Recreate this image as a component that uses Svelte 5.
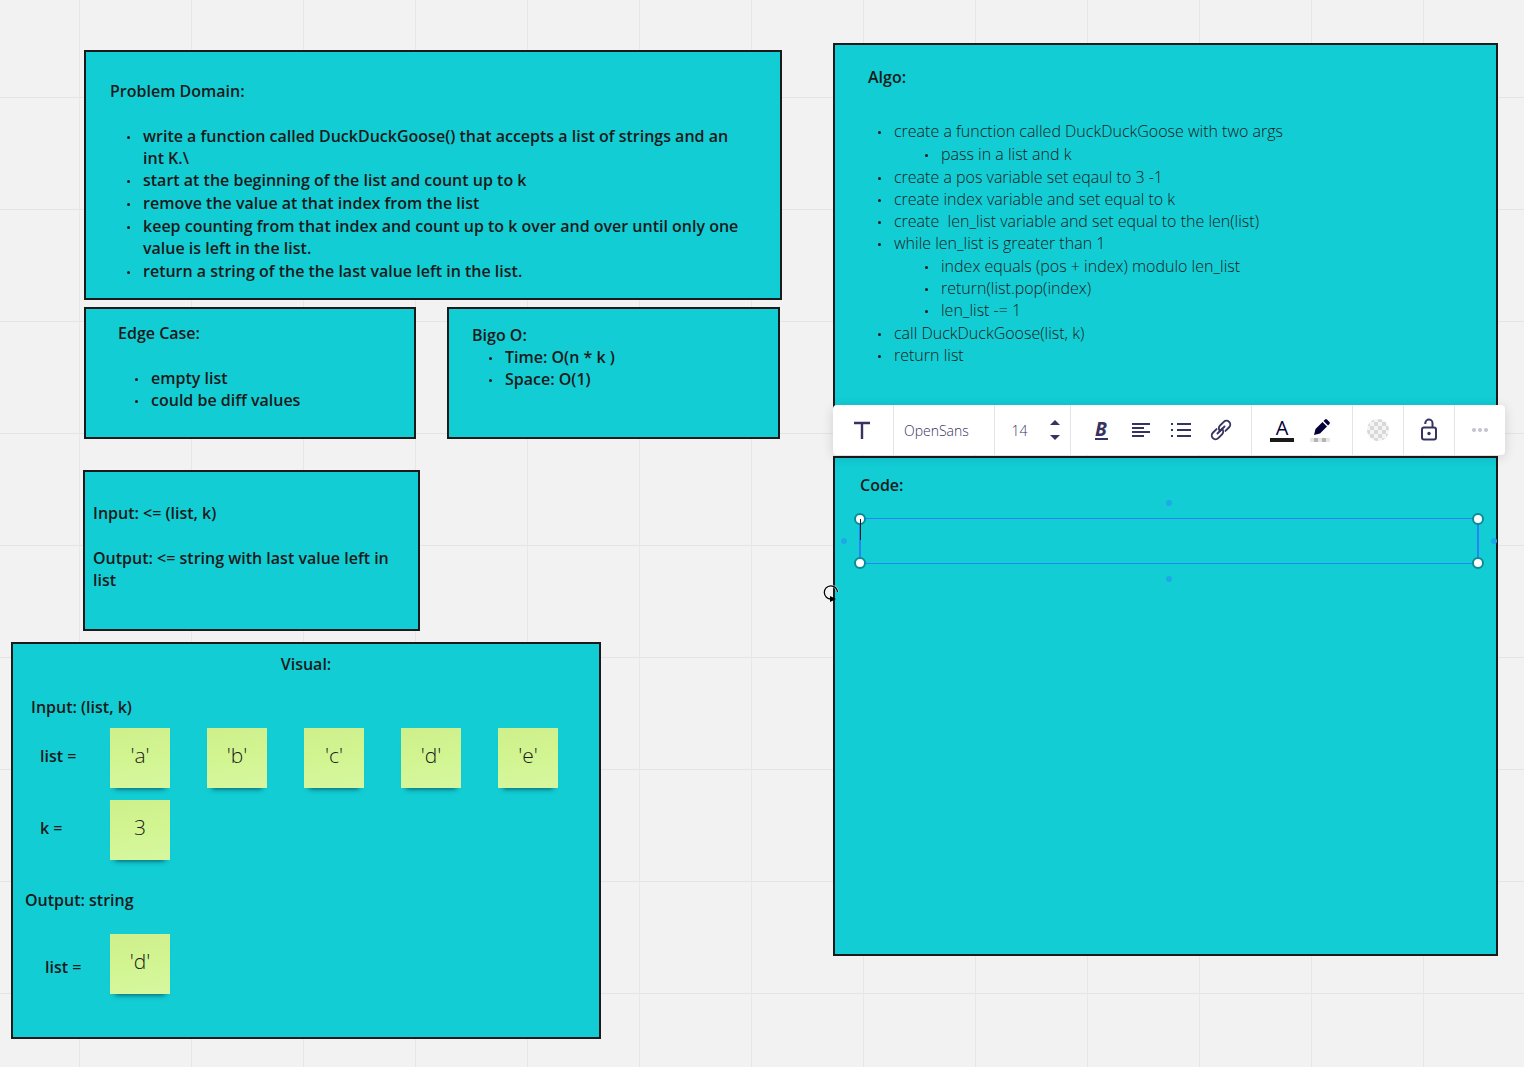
<script>
  const values = ["'a'", "'b'", "'c'", "'d'", "'e'"];

  const steps = [
    { text: 'create a function called DuckDuckGoose with two args', sub: ['pass in a list and k'] },
    { text: 'create a pos variable set eqaul to 3 -1' },
    { text: 'create index variable and set equal to k' },
    { text: 'create \u00a0len_list variable and set equal to the len(list)' },
    {
      text: 'while len_list is greater than 1',
      sub: ['index equals (pos + index) modulo len_list', 'return(list.pop(index)', 'len_list -= 1']
    },
    { text: 'call DuckDuckGoose(list, k)' },
    { text: 'return list' }
  ];

  let font = $state('OpenSans');
  let size = $state('14');
  let code = $state('');
</script>

<main class="board">
  <section class="frame domain">
    <h2>Problem Domain:</h2>
    <ul>
      <li>write a function called DuckDuckGoose() that accepts a list of strings and an int K.\</li>
      <li>start at the beginning of the list and count up to k</li>
      <li>remove the value at that index from the list</li>
      <li>keep counting from that index and count up to k over and over until only one value is left in the list.</li>
      <li>return a string of the the last value left in the list.</li>
    </ul>
  </section>

  <section class="frame edge">
    <h2>Edge Case:</h2>
    <ul>
      <li>empty list</li>
      <li>could be diff values</li>
    </ul>
  </section>

  <section class="frame bigo">
    <h2>Bigo O:</h2>
    <ul>
      <li>Time: O(n * k )</li>
      <li>Space: O(1)</li>
    </ul>
  </section>

  <section class="frame io">
    <p>Input: &lt;= (list, k)</p>
    <p>Output: &lt;= string with last value left in list</p>
  </section>

  <section class="frame visual">
    <h2>Visual:</h2>
    <h3>Input: (list, k)</h3>
    <div class="row">
      <span class="label">list =</span>
      {#each values as value}
        <div class="note">{value}</div>
      {/each}
    </div>
    <div class="row">
      <span class="label">k =</span>
      <div class="note">3</div>
    </div>
    <h3 class="out">Output: string</h3>
    <div class="row result">
      <span class="label">list =</span>
      <div class="note">'d'</div>
    </div>
  </section>

  <section class="frame algo">
    <h2>Algo:</h2>
    <ul>
      {#each steps as step}
        <li>
          {step.text}
          {#if step.sub}
            <ul>
              {#each step.sub as line}
                <li>{line}</li>
              {/each}
            </ul>
          {/if}
        </li>
      {/each}
    </ul>
  </section>

  <section class="frame code">
    <h2><label for="code-text">Code:</label></h2>
    <div class="selection">
      <textarea id="code-text" bind:value={code}></textarea>
      <i class="handle tl"></i>
      <i class="handle tr"></i>
      <i class="handle bl"></i>
      <i class="handle br"></i>
      <i class="caret"></i>
      <i class="dot north"></i>
      <i class="dot south"></i>
      <i class="dot west"></i>
      <i class="dot east"></i>
    </div>
  </section>

  <div class="toolbar" role="toolbar" aria-label="Text formatting">
    <div class="group type">
      <button aria-label="Switch type">
        <svg width="20" height="20" viewBox="0 0 20 20"><path d="M1 3h16M9 3v16" stroke-width="2.4" /></svg>
      </button>
    </div>
    <div class="group font">
      <select aria-label="Font" bind:value={font}>
        <option>OpenSans</option>
      </select>
    </div>
    <div class="group size">
      <input aria-label="Font size" type="text" bind:value={size} />
      <div class="stepper">
        <button aria-label="Increase size" onclick={() => (size = String(Number(size) + 1))}>
          <svg width="10" height="5" viewBox="0 0 10 5"><path class="fill" d="M0 5 5 0l5 5z" /></svg>
        </button>
        <button aria-label="Decrease size" onclick={() => (size = String(Number(size) - 1))}>
          <svg width="10" height="5" viewBox="0 0 10 5"><path class="fill" d="M0 0h10L5 5z" /></svg>
        </button>
      </div>
    </div>
    <div class="group styles">
      <button class="bold" aria-label="Bold"><span>B</span></button>
      <button aria-label="Align">
        <svg width="20" height="20" viewBox="0 0 20 20"><path d="M1 4h18M1 8h12M1 12h18M1 16h12" stroke-width="2" /></svg>
      </button>
      <button aria-label="List">
        <svg width="20" height="20" viewBox="0 0 20 20"><path d="M0 4h2M6 4h14M0 10h2M6 10h14M0 16h2M6 16h14" stroke-width="2" /></svg>
      </button>
      <button aria-label="Link">
        <svg width="20" height="20" viewBox="0 0 20 20">
          <g transform="rotate(-45 10 10)" stroke-width="1.9" stroke-linecap="round">
            <path d="M7.500 6.200H2.300A3.800 3.800 0 0 0 2.300 13.800H7.700A3.800 3.800 0 0 0 11.500 10H5" />
            <path d="M12.500 13.800H17.700A3.800 3.800 0 0 0 17.700 6.200H12.300A3.800 3.800 0 0 0 8.500 10H15" />
          </g>
        </svg>
      </button>
    </div>
    <div class="group colors">
      <button class="ink" aria-label="Text color"><span>A</span></button>
      <button class="marker" aria-label="Highlight">
        <svg width="20" height="24" viewBox="0 0 20 24">
          <path class="dark" d="M4 17 5.500 11 12.500 4 17 8.500 10 15.500z" />
          <path class="dark" d="M13.500 3 15 1.500Q16 .5 17 1.500L19.500 4Q20.400 5 19.500 6L18 7.500z" />
          <path d="M0 20h20v4H0z" fill="#e6e6e6" stroke="none" />
          <path d="M4 20h4v4H4zM12 20h4v4h-4z" fill="#b4b4b4" stroke="none" />
        </svg>
      </button>
    </div>
    <div class="group one">
      <button aria-label="Background"><i class="swatch"></i></button>
    </div>
    <div class="group one">
      <button aria-label="Lock">
        <svg width="18" height="24" viewBox="0 0 18 24">
          <rect x="2" y="9.500" width="14" height="12" rx="2" stroke-width="2" />
          <path d="M12.500 9V5.500a3.600 3.600 0 0 0-7.200-.6V6" stroke-width="2" />
          <circle class="fill" cx="9" cy="15.500" r="1.700" />
        </svg>
      </button>
    </div>
    <div class="group one">
      <button aria-label="More">
        <svg width="18" height="6" viewBox="0 0 18 6">
          <g fill="#c3c1d2" stroke="none"><circle cx="3" cy="3" r="2" /><circle cx="9" cy="3" r="2" /><circle cx="15" cy="3" r="2" /></g>
        </svg>
      </button>
    </div>
  </div>

  <svg class="cursor" width="18" height="18" viewBox="0 0 18 18">
    <path d="M15.500 8A6.600 6.600 0 1 0 9 15" stroke="#fff" stroke-opacity=".6" stroke-width="2.600" />
    <path d="M15.500 8A6.600 6.600 0 1 0 9 15" stroke="#000" stroke-width="1.300" />
    <path d="M8 12 14 15 8 18z" fill="#000" stroke="none" />
  </svg>
</main>

<style>
  :global(body) {
    margin: 0;
  }

  .board {
    position: relative;
    min-height: 100vh;
    min-width: 1505px;
    overflow: hidden;
    box-sizing: border-box;
    background-color: #f2f2f2;
    background-image:
      linear-gradient(to right, #e7e7e7 1px, transparent 1px),
      linear-gradient(to bottom, #e4e4e4 1px, transparent 1px);
    background-size: 112px 112px;
    background-position: 79px 97px;
    color: #1a1a1a;
    font: 600 16px/22px 'Open Sans', 'Noto Sans', sans-serif;
  }

  .board *,
  .board *::before {
    box-sizing: border-box;
  }

  h2,
  h3,
  p,
  ul {
    margin: 0;
    padding: 0;
    font: inherit;
  }

  /* Frames sit freely on the canvas */
  .frame {
    position: absolute;
    border: 2px solid #1a1a1a;
    background: #12cdd4;
  }

  .domain {
    left: 84px;
    top: 50px;
    width: 698px;
    height: 250px;
    padding: 28px 34px 28px 24px;
  }

  .edge {
    left: 84px;
    top: 307px;
    width: 332px;
    height: 132px;
    padding: 13px 32px;
  }

  .bigo {
    left: 447px;
    top: 307px;
    width: 333px;
    height: 132px;
    padding: 15px 23px;
  }

  .io {
    left: 83px;
    top: 470px;
    width: 337px;
    height: 161px;
    padding: 30px 8px;
  }

  .io p + p {
    margin-top: 23px;
  }

  .visual {
    left: 11px;
    top: 642px;
    width: 590px;
    height: 397px;
    padding: 9px 12px;
  }

  .algo {
    left: 833px;
    top: 43px;
    width: 665px;
    height: 391px;
    padding: 21px 33px;
    font-weight: 300;
  }

  .code {
    left: 833px;
    top: 456px;
    width: 665px;
    height: 500px;
    padding: 16px 17px 16px 25px;
  }

  ul {
    list-style: none;
    padding-left: 33px;
  }

  li::before {
    content: '';
    display: inline-block;
    width: 3px;
    height: 3px;
    margin: 0 13px 0 -16px;
    border-radius: 50%;
    background: #1a1a1a;
    vertical-align: 3px;
  }

  .domain ul,
  .edge ul {
    margin-top: 23px;
  }

  .domain li:nth-child(n + 3) {
    margin-top: 1px;
  }

  .algo h2 {
    font-weight: 600;
  }

  .algo > ul {
    margin-top: 32px;
    padding-left: 26px;
  }

  .algo ul ul {
    padding: 1px 0 1px 47px;
  }

  .visual h2 {
    text-align: center;
  }

  .visual h3 {
    margin: 21px 6px 10px;
  }

  .visual .out {
    margin: 29px 0 23px;
  }

  .row {
    display: flex;
    gap: 37px;
    align-items: center;
    margin-bottom: 12px;
    padding-left: 15px;
  }

  .label {
    width: 70px;
    margin-right: -37px;
    padding-bottom: 4px;
  }

  .result {
    padding-left: 20px;
  }

  .result .label {
    width: 65px;
    padding: 6px 0 0;
  }

  .note {
    display: flex;
    flex: none;
    align-items: center;
    justify-content: center;
    width: 60px;
    height: 60px;
    padding-bottom: 6px;
    background: linear-gradient(170deg, #cdf08b, #d2f592 50%, #d6f7a0);
    font-size: 21px;
    font-weight: 300;
    box-shadow: 0 6px 5px -5px rgba(0, 50, 60, 0.75);
  }

  /* Text box being edited */
  .selection {
    position: relative;
    height: 46px;
    margin: 22px 0 0 -1px;
    border: 1px solid #2684f5;
    border-width: 1px 2px;
  }

  textarea {
    display: block;
    width: 100%;
    height: 100%;
    padding: 0;
    border: 0;
    outline: 0;
    resize: none;
    background: transparent;
    color: #1a1a1a;
    font: inherit;
  }

  .caret {
    position: absolute;
    left: -1px;
    top: 0;
    width: 1px;
    height: 21px;
    background: #1a1a1a;
  }

  .handle {
    position: absolute;
    width: 12px;
    height: 12px;
    border: 2px solid #0b8c94;
    border-radius: 50%;
    background: #fff;
  }

  .tl,
  .tr {
    top: -6px;
  }

  .bl,
  .br {
    bottom: -6px;
  }

  .tl,
  .bl {
    left: -7px;
  }

  .tr,
  .br {
    right: -7px;
  }

  .dot {
    position: absolute;
    width: 6px;
    height: 6px;
    border-radius: 50%;
    background: #1fa8e8;
  }

  .north,
  .south {
    left: calc(50% - 3px);
  }

  .north {
    top: -19px;
  }

  .south {
    bottom: -19px;
  }

  .west,
  .east {
    top: calc(50% - 3px);
  }

  .west {
    left: -20px;
  }

  .east {
    right: -20px;
  }

  /* Floating toolbar */
  .toolbar {
    position: absolute;
    left: 833px;
    top: 405px;
    display: flex;
    height: 50px;
    border-radius: 4px;
    background: #fff;
    box-shadow: 0 2px 12px rgba(5, 0, 56, 0.14);
    color: #373360;
  }

  .group {
    display: flex;
    align-items: center;
    justify-content: center;
  }

  .group + .group {
    border-left: 1px solid #e4e4e8;
  }

  .type {
    width: 60px;
  }

  .font {
    width: 101px;
    padding: 0 10px;
  }

  .size {
    width: 76px;
    gap: 12px;
    padding-left: 8px;
  }

  .styles {
    width: 181px;
    gap: 12px;
  }

  .colors {
    width: 101px;
    gap: 10px;
    padding-right: 2px;
  }

  .one {
    width: 51px;
  }

  button {
    display: flex;
    align-items: center;
    justify-content: center;
    min-width: 28px;
    height: 28px;
    padding: 0;
    border: 0;
    background: none;
    color: inherit;
    font: inherit;
    cursor: pointer;
  }

  svg {
    display: block;
    overflow: visible;
    fill: none;
    stroke: #373360;
  }

  .fill {
    fill: #373360;
    stroke: none;
  }

  .dark {
    fill: #050038;
    stroke: none;
  }

  select,
  input {
    width: 100%;
    padding: 2px 0 0;
    border: 0;
    appearance: none;
    background: none;
    color: inherit;
    font: 300 14px/20px 'Open Sans', 'Noto Sans', sans-serif;
  }

  input {
    width: 24px;
    text-align: center;
  }

  .stepper {
    display: flex;
    flex-direction: column;
    gap: 10px;
  }

  .stepper button {
    min-width: 22px;
    height: 5px;
  }

  .bold span {
    width: 13px;
    border-bottom: 2px solid #373360;
    font-size: 19px;
    font-style: italic;
    font-weight: 700;
    line-height: 18px;
  }

  .ink {
    color: #050038;
  }

  .ink span {
    width: 24px;
    border-bottom: 4px solid #1a1a1a;
    font-size: 20px;
    font-weight: 500;
    line-height: 20px;
  }

  .swatch {
    width: 22px;
    height: 22px;
    border-radius: 50%;
    background: repeating-conic-gradient(#d8d8d8 0 25%, #f4f4f4 0 50%) 3px 3px / 8px 8px;
  }

  .cursor {
    position: absolute;
    left: 822px;
    top: 584px;
  }
</style>
